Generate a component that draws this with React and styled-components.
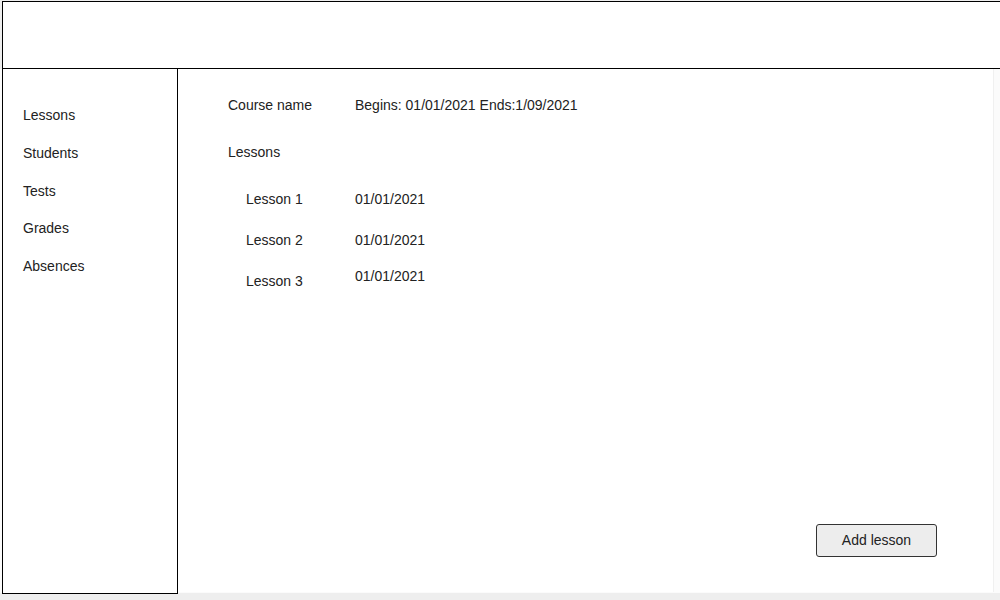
import React from "react";
import styled, { createGlobalStyle } from "styled-components";

const Global = createGlobalStyle`
  html, body { margin: 0; padding: 0; }
  body {
    background: #eeeeee;
    font-family: "Liberation Sans", Arial, sans-serif;
    font-size: 14px;
    color: #222222;
    overflow: hidden;
  }
  * { box-sizing: border-box; }
`;

const Page = styled.div`
  width: 1000px;
  height: 600px;
  display: flex;
  flex-direction: column;
  padding-top: 1px;
`;

const Header = styled.header`
  height: 68px;
  margin-left: 2px;
  width: 1010px;
  border: 1px solid #000;
  background: #fff;
  flex-shrink: 0;
`;

const Body = styled.div`
  display: flex;
  height: 524px;
  background: #fbfbfb;
`;

const Sidebar = styled.nav`
  width: 176px;
  height: 525px;
  margin-left: 2px;
  border: 1px solid #000;
  border-top: none;
  background: #fff;
  display: flex;
  flex-direction: column;
  gap: 21.75px;
  padding: 38px 0 0 20px;
  flex-shrink: 0;
`;

const NavItem = styled.a`
  line-height: 16px;
  color: #222;
  text-decoration: none;
`;

const Main = styled.main`
  width: 816px;
  height: 523px;
  background: #fff;
  border-right: 1px solid #f0f0f0;
  display: flex;
  flex-direction: column;
  padding: 28px 56px 35px 50px;
`;

const InfoRow = styled.div`
  display: grid;
  grid-template-columns: 127px auto;
  line-height: 16px;
`;

const SectionTitle = styled.div`
  line-height: 16px;
  margin-top: 31px;
`;

const LessonList = styled.div`
  margin-top: 31px;
  padding-left: 18px;
  display: flex;
  flex-direction: column;
`;

const LessonRow = styled.div`
  display: grid;
  grid-template-columns: 109px auto;
  align-items: start;
  line-height: 16px;
  margin-top: ${(p) => (p.$first ? "0" : p.$stagger ? "20px" : "25px")};
`;

const LessonName = styled.span`
  margin-top: ${(p) => (p.$stagger ? "5px" : "0")};
`;

const LessonDate = styled.span``;

const AddButton = styled.button`
  margin-top: auto;
  align-self: flex-end;
  width: 121px;
  height: 33px;
  background: #ededed;
  border: 1px solid #333;
  border-radius: 3px;
  font-family: "Liberation Sans", Arial, sans-serif;
  font-size: 14px;
  color: #222;
  padding: 0 0 2px;
`;

const nav = ["Lessons", "Students", "Tests", "Grades", "Absences"];
const lessons = [
  { name: "Lesson 1", date: "01/01/2021" },
  { name: "Lesson 2", date: "01/01/2021" },
  { name: "Lesson 3", date: "01/01/2021", stagger: true },
];

export default function App() {
  return (
    <>
      <Global />
      <Page>
        <Header />
        <Body>
          <Sidebar>
            {nav.map((n) => (
              <NavItem key={n}>{n}</NavItem>
            ))}
          </Sidebar>
          <Main>
            <InfoRow>
              <span>Course name</span>
              <span>Begins: 01/01/2021 Ends:1/09/2021</span>
            </InfoRow>
            <SectionTitle>Lessons</SectionTitle>
            <LessonList>
              {lessons.map((l, i) => (
                <LessonRow key={l.name} $first={i === 0} $stagger={l.stagger}>
                  <LessonName $stagger={l.stagger}>{l.name}</LessonName>
                  <LessonDate>{l.date}</LessonDate>
                </LessonRow>
              ))}
            </LessonList>
            <AddButton>Add lesson</AddButton>
          </Main>
        </Body>
      </Page>
    </>
  );
}
